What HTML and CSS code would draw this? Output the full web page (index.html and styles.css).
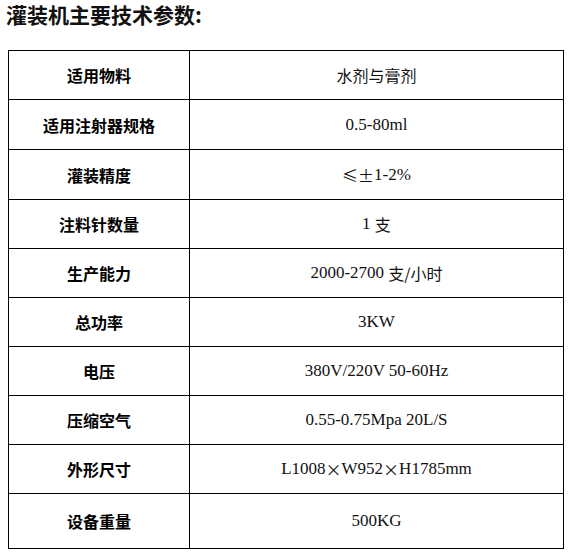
FILE: index.html
```html
<!DOCTYPE html>
<html lang="zh-CN">
<head>
<meta charset="utf-8">
<title>灌装机主要技术参数</title>
<link rel="stylesheet" href="styles.css">
</head>
<body>
<h1 class="title">灌装机主要技术参数:</h1>
<div class="spec">
  <div class="k">适用物料</div><div class="v cjk">水剂与膏剂</div>
  <div class="k">适用注射器规格</div><div class="v">0.5-80ml</div>
  <div class="k">灌装精度</div><div class="v"><span class="cjk">≤±</span>1-2%</div>
  <div class="k">注料针数量</div><div class="v">1 <span class="cjk">支</span></div>
  <div class="k">生产能力</div><div class="v">2000-2700 <span class="cjk">支/小时</span></div>
  <div class="k">总功率</div><div class="v">3KW</div>
  <div class="k">电压</div><div class="v">380V/220V 50-60Hz</div>
  <div class="k">压缩空气</div><div class="v">0.55-0.75Mpa 20L/S</div>
  <div class="k">外形尺寸</div><div class="v">L1008<span class="cjk">×</span>W952<span class="cjk">×</span>H1785mm</div>
  <div class="k">设备重量</div><div class="v">500KG</div>
</div>
</body>
</html>
```
FILE: styles.css
```css
html, body {
  margin: 0;
  padding: 0;
  background: #fff;
  color: #000;
}
body {
  font-family: "Noto Sans CJK SC", "Liberation Sans", sans-serif;
}
.title {
  margin: 0 0 22px 6px;
  font-size: 21px;
  line-height: 28px;
  font-weight: 700;
  color: #111;
}
.spec {
  margin-left: 8px;
  width: 555px;
  display: grid;
  grid-template-columns: 181px 374px;
  grid-template-rows: 49px 50px 50px 49px 49px 49px 49px 49px 49px 55px;
  border-left: 1px solid #000;
  border-top: 1px solid #000;
}
.k, .v {
  display: flex;
  align-items: center;
  justify-content: center;
  border-right: 1px solid #000;
  border-bottom: 1px solid #000;
  box-sizing: border-box;
}
.k {
  font-family: "Noto Sans CJK SC", sans-serif;
  font-weight: 700;
  font-size: 16px;
}
.v {
  font-family: "Liberation Serif", "Noto Sans CJK SC", serif;
  font-size: 17px;
  font-weight: 400;
  color: #111;
  white-space: pre;
}
.cjk {
  font-family: "Noto Sans CJK SC", sans-serif;
  font-size: 16px;
  font-weight: 400;
}
```
